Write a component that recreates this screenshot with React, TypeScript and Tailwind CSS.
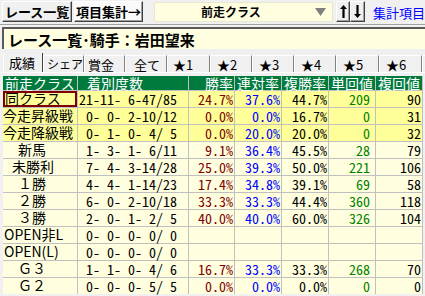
import React from 'react';

type Row = {
  name: string;
  indent: string;
  rec: string;
  win?: string;
  ren?: string;
  fuku?: string;
  tan?: string;
  fk?: string;
  hot?: boolean;
  sel?: boolean;
};

const rows: Row[] = [
  { name: '同クラス', indent: 'pl-[2px]', rec: '21-11- 6-47/85', win: '24.7%', ren: '37.6%', fuku: '44.7%', tan: '209', fk: '90', hot: true, sel: true },
  { name: '今走昇級戦', indent: 'pl-[0px]', rec: '0- 0- 2-10/12', win: '0.0%', ren: '0.0%', fuku: '16.7%', tan: '0', fk: '31', hot: true },
  { name: '今走降級戦', indent: 'pl-[0px]', rec: '0- 1- 0- 4/ 5', win: '0.0%', ren: '20.0%', fuku: '20.0%', tan: '0', fk: '32', hot: true },
  { name: '新馬', indent: 'pl-[15px]', rec: '1- 3- 1- 6/11', win: '9.1%', ren: '36.4%', fuku: '45.5%', tan: '28', fk: '79' },
  { name: '未勝利', indent: 'pl-[9px]', rec: '7- 4- 3-14/28', win: '25.0%', ren: '39.3%', fuku: '50.0%', tan: '221', fk: '106' },
  { name: '１勝', indent: 'pl-[15px]', rec: '4- 4- 1-14/23', win: '17.4%', ren: '34.8%', fuku: '39.1%', tan: '69', fk: '58' },
  { name: '２勝', indent: 'pl-[15px]', rec: '6- 0- 2-10/18', win: '33.3%', ren: '33.3%', fuku: '44.4%', tan: '360', fk: '118' },
  { name: '３勝', indent: 'pl-[15px]', rec: '2- 0- 1- 2/ 5', win: '40.0%', ren: '40.0%', fuku: '60.0%', tan: '326', fk: '104' },
  { name: 'OPEN非L', indent: 'pl-[1px]', rec: '0- 0- 0- 0/ 0' },
  { name: 'OPEN(L)', indent: 'pl-[1px]', rec: '0- 0- 0- 0/ 0' },
  { name: 'Ｇ３', indent: 'pl-[15px]', rec: '1- 1- 0- 4/ 6', win: '16.7%', ren: '33.3%', fuku: '33.3%', tan: '268', fk: '70' },
  { name: 'Ｇ２', indent: 'pl-[15px]', rec: '0- 0- 0- 5/ 5', win: '0.0%', ren: '0.0%', fuku: '0.0%', tan: '0', fk: '0' },
];

const tabs = [
  { key: 'a', label: '成績', cls: 'w-[40px] pl-[5px] text-[13px]' },
  { key: 'b', label: 'シェア', cls: 'w-[41px] pl-[3px] text-[12px]' },
  { key: 'c', label: '賞金', cls: 'w-[41px] pl-[3px] text-[13px]' },
  { key: 'd', label: '全て', cls: 'w-[42px] pl-[8px] text-[13px]' },
  { key: 'e', label: '★1', cls: 'w-[43px] pl-[5px] text-[13px]' },
  { key: 'f', label: '★2', cls: 'w-[42px] pl-[6px] text-[13px]' },
  { key: 'g', label: '★3', cls: 'w-[42px] pl-[6px] text-[13px]' },
  { key: 'h', label: '★4', cls: 'w-[42px] pl-[6px] text-[13px]' },
  { key: 'i', label: '★5', cls: 'w-[43px] pl-[6px] text-[13px]' },
  { key: 'j', label: '★6', cls: 'w-[43px] pl-[6px] text-[13px]' },
  { key: 'k', label: '', cls: 'w-[43px] pl-[6px] text-[13px]' },
];

const raised =
  'border border-t-white border-l-white border-b-[#404040] border-r-[#404040] shadow-[inset_-1px_-1px_0_#a0a0a0]';

const App: React.FC = () => {
  return (
    <div className="w-[425px] h-[296px] overflow-hidden bg-[#f0f0f0] font-['Noto_Sans_CJK_JP',sans-serif] text-black">
      {/* toolbar */}
      <div className="flex items-start h-[25px] pt-px pl-[2px] border-b border-[#a0a0a0]">
        <div className={`w-[73px] h-[21px] flex items-center justify-center text-[13px] font-bold leading-none bg-[#f0f0f0] ${raised}`}>
          レース一覧
        </div>
        <div className={`ml-[2px] w-[71px] h-[21px] flex items-center justify-center text-[13px] font-bold leading-none bg-[#fafafa] ${raised}`}>
          項目集計→
        </div>
        <div className="ml-[11px] mt-px w-[186px] h-[20px] bg-[#ffffe0] border border-[#e8e8d0] flex items-center">
          <span className="flex-1 text-center text-[12px] font-bold leading-none pr-[8px]">前走クラス</span>
          <svg width="11" height="8" viewBox="0 0 11 8" className="mr-[6px]">
            <path d="M0 0 H11 L5.5 8 Z" fill="#808080" />
          </svg>
        </div>
        <div className={`ml-[3px] w-[15px] h-[21px] flex items-center justify-center bg-[#f0f0f0] ${raised}`}>
          <svg width="7" height="13" viewBox="0 0 7 13">
            <path d="M3.5 0 L7 4 H4.6 V13 H2.4 V4 H0 Z" fill="#000" />
          </svg>
        </div>
        <div className={`w-[15px] h-[21px] flex items-center justify-center bg-[#f0f0f0] ${raised}`}>
          <svg width="7" height="13" viewBox="0 0 7 13">
            <path d="M3.5 13 L7 9 H4.6 V0 H2.4 V9 H0 Z" fill="#000" />
          </svg>
        </div>
        <div className="ml-[8px] h-[22px] flex items-center text-[13px] leading-none text-[#0000ff] whitespace-nowrap">
          集計項目
        </div>
      </div>

      {/* title */}
      <div className="mt-[2px] ml-[2px] h-[22px] bg-[#ffffe0] border-t-2 border-l-2 border-[#5a5a5a] flex items-center pl-[4px] text-[15px] font-bold leading-none whitespace-nowrap">
        レース一覧･騎手：岩田望来
      </div>

      {/* tabs */}
      <div className="mt-[4px] h-[20px] pl-[3px] flex items-end overflow-hidden border-b border-white">
        {tabs.map((t, i) => (
          <div
            key={t.key}
            className={`${t.cls} shrink-0 flex items-center leading-none whitespace-nowrap border-t border-l border-white border-r bg-[#f0f0f0] ${
              i === 0 ? 'h-[20px] border-r-[#404040]' : 'h-[17px] border-r-[#808080]'
            }`}
          >
            {t.label}
          </div>
        ))}
      </div>

      {/* table */}
      <div className="mt-[3px] ml-[3px] w-[420px] grid grid-cols-[74px_110px_45px_46px_46px_46px_46px] gap-px bg-[#c0c0c0] border-r border-[#c0c0c0] text-[14px]">
        <div className="h-[14px] bg-[#007a3d] text-white leading-[14px] pl-[2px] whitespace-nowrap">前走クラス</div>
        <div className="h-[14px] bg-[#007a3d] text-white leading-[14px] pl-[9px]">着別度数</div>
        <div className="h-[14px] bg-[#007a3d] text-white leading-[14px] text-right pr-[1px]">勝率</div>
        <div className="h-[14px] bg-[#007a3d] text-white leading-[14px] text-center">連対率</div>
        <div className="h-[14px] bg-[#007a3d] text-white leading-[14px] text-center">複勝率</div>
        <div className="h-[14px] bg-[#007a3d] text-white leading-[14px] text-center">単回値</div>
        <div className="h-[14px] bg-[#007a3d] text-white leading-[14px] text-center">複回値</div>
        {rows.map((r) => {
          const bg = r.hot ? 'bg-[#ffff99]' : 'bg-[#ffffe0]';
          const num = `h-[16px] leading-[16px] ${bg} text-right whitespace-pre [font-feature-settings:'hwid']`;
          return (
            <React.Fragment key={r.name}>
              <div
                className={`h-[16px] leading-[15px] ${bg} ${r.indent} whitespace-nowrap ${
                  r.sel ? 'shadow-[inset_0_0_0_2px_#800000]' : ''
                }`}
              >
                {r.name}
              </div>
              <div className={`${num} pr-[11px]`}>{r.rec}</div>
              <div className={`${num} pr-[1px] text-[#800000]`}>{r.win}</div>
              <div className={`${num} pr-[1px] text-[#0000ff]`}>{r.ren}</div>
              <div className={`${num} pr-[1px]`}>{r.fuku}</div>
              <div className={`${num} pr-[5px] text-[#008000]`}>{r.tan}</div>
              <div className={`${num} pr-[1px]`}>{r.fk}</div>
            </React.Fragment>
          );
        })}
      </div>
    </div>
  );
};

export default App;
